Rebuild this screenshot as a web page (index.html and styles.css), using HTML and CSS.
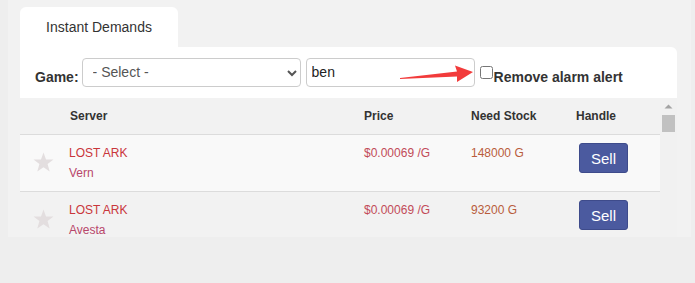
FILE: index.html
```html
<!DOCTYPE html>
<html>
<head>
<meta charset="utf-8">
<link rel="stylesheet" href="styles.css">
</head>
<body>
<div class="page">
  <div class="tab">Instant Demands</div>
  <div class="panel">
    <label class="field-label">Game:</label>
    <div class="select-wrap">
      <select class="game-select"><option>- Select -</option></select>
      <svg class="chevron" width="10" height="7" viewBox="0 0 10 7"><path d="M1 1 L5 5 L9 1" fill="none" stroke="#555" stroke-width="2"/></svg>
    </div>
    <input class="search" type="text" value="ben">
    <label class="alarm"><input class="alarm-box" type="checkbox"><span class="field-label">Remove alarm alert</span></label>
    <svg class="arrow" width="80" height="24" viewBox="0 0 80 24"><polygon points="2,17 59,10.5 57,4.5 75,11 59,21 59,15.5 2,18" fill="#f23b3b"/></svg>
  </div>
  <div class="table-wrap">
    <div class="table">
      <div class="row head">
        <div class="c-star"></div>
        <div class="c-server">Server</div>
        <div class="c-price">Price</div>
        <div class="c-stock">Need Stock</div>
        <div class="c-handle">Handle</div>
      </div>
      <div class="row odd">
        <div class="c-star"><svg width="20" height="19" viewBox="0 0 20 19"><polygon points="10,0.5 12.4,7 19.5,7.1 13.9,11.5 15.9,18.5 10,14.4 4.1,18.5 6.1,11.5 0.5,7.1 7.6,7" fill="#e3dedf"/></svg></div>
        <div class="c-server"><div class="game">LOST ARK</div><div class="server">Vern</div></div>
        <div class="c-price">$0.00069 /G</div>
        <div class="c-stock">148000 G</div>
        <div class="c-handle"><button class="sell">Sell</button></div>
      </div>
      <div class="row even">
        <div class="c-star"><svg width="20" height="19" viewBox="0 0 20 19"><polygon points="10,0.5 12.4,7 19.5,7.1 13.9,11.5 15.9,18.5 10,14.4 4.1,18.5 6.1,11.5 0.5,7.1 7.6,7" fill="#e3dedf"/></svg></div>
        <div class="c-server"><div class="game">LOST ARK</div><div class="server">Avesta</div></div>
        <div class="c-price">$0.00069 /G</div>
        <div class="c-stock">93200 G</div>
        <div class="c-handle"><button class="sell">Sell</button></div>
      </div>
    </div>
    <div class="scrollbar">
      <svg class="sb-up" width="9" height="5" viewBox="0 0 9 5"><polygon points="0.5,4.5 4.5,0.5 8.5,4.5" fill="#a3a3a3"/></svg>
      <div class="sb-thumb"></div>
    </div>
  </div>
</div>
</body>
</html>
```

FILE: styles.css
```css
* { box-sizing: border-box; }
html, body { margin: 0; padding: 0; }
body {
  background: #eeeeee;
  font-family: "Liberation Sans", Arial, sans-serif;
  color: #333;
  width: 695px;
  height: 283px;
  overflow: hidden;
}
.page {
  margin-left: 8px;
  width: 683px;
  height: 237px;
  background: #f2f2f2;
  padding: 7px 14px 0 12px;
  overflow: hidden;
}
.tab {
  width: 158px;
  height: 40px;
  background: #fff;
  border-radius: 6px 6px 0 0;
  font-size: 14px;
  line-height: 40px;
  text-align: center;
  color: #333;
}
.panel {
  position: relative;
  height: 51px;
  background: #fff;
  border-radius: 0 6px 0 0;
  display: flex;
  align-items: flex-start;
  padding: 11px 0 0 15px;
}
.field-label {
  font-weight: bold;
  font-size: 14px;
  color: #333;
  padding-top: 11px;
  line-height: 16px;
}
.select-wrap {
  position: relative;
  margin-left: 3px;
  width: 219px;
  height: 29px;
}
.game-select {
  appearance: none;
  -webkit-appearance: none;
  width: 219px;
  height: 29px;
  border: 1px solid #ccc;
  border-radius: 4px;
  background: #fff;
  font-family: "Liberation Sans", Arial, sans-serif;
  font-size: 14px;
  color: #555;
  padding: 0 0 2px 10px;
  margin: 0;
}
.chevron {
  position: absolute;
  left: 205px;
  top: 12px;
}
.search {
  margin-left: 5px;
  width: 169px;
  height: 29px;
  border: 1px solid #ccc;
  border-radius: 4px;
  font-family: "Liberation Sans", Arial, sans-serif;
  font-size: 14px;
  color: #222;
  padding: 0 0 2px 5px;
  outline: none;
}
.alarm {
  display: flex;
  align-items: flex-start;
}
.alarm .field-label { padding-top: 11px; }
.alarm-box {
  margin: 8px 1px 0 5px;
  width: 13px;
  height: 13px;
}
.arrow {
  position: absolute;
  left: 378px;
  top: 14px;
}
.table-wrap {
  display: flex;
  height: 139px;
  overflow: hidden;
}
.table { flex: 1; }
.row {
  display: grid;
  grid-template-columns: 49px 295px 107px 105px 1fr;
  border-bottom: 1px solid #dcdcdc;
}
.head {
  height: 37px;
  background: #f2f2f2;
  font-weight: bold;
  font-size: 12px;
  color: #333;
  align-items: center;
  padding-bottom: 1px;
}
.head .c-server { padding-left: 1px; }
.odd { background: #f9f9f9; height: 57px; }
.even { background: #f2f2f2; height: 57px; }
.odd > div, .even > div {
  font-size: 12px;
  line-height: 20px;
  padding-top: 8px;
}
.odd .c-star, .even .c-star {
  padding: 17px 0 0 13px;
}
.c-star svg { display: block; width: 21px; height: 20px; }
.game { color: #c9363b; }
.server { color: #b8466a; }
.odd .c-price, .even .c-price { color: #c24b58; }
.odd .c-stock, .even .c-stock { color: #b95d3c; }
.sell {
  display: block;
  margin-left: 3px;
  width: 49px;
  height: 30px;
  background: #4b5a9f;
  border: 1px solid #3e4b8b;
  border-radius: 3px;
  color: #fff;
  font-family: "Liberation Sans", Arial, sans-serif;
  font-size: 15px;
  padding: 0;
}
.scrollbar {
  width: 17px;
  background: #f1f1f1;
  display: flex;
  flex-direction: column;
  align-items: center;
}
.sb-up { margin-top: 6px; display: block; }
.sb-thumb {
  margin-top: 6px;
  width: 13px;
  height: 17px;
  background: #c1c1c1;
}
```
